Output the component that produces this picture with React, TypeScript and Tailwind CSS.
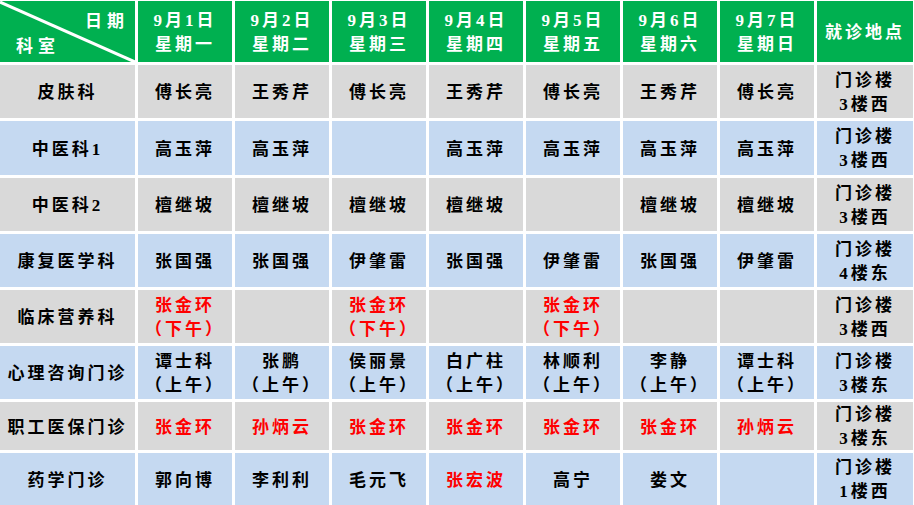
import React from 'react';

type Cell = { name?: string; note?: string; red?: boolean };

const days = [
  { date: '9月1日', week: '星期一' },
  { date: '9月2日', week: '星期二' },
  { date: '9月3日', week: '星期三' },
  { date: '9月4日', week: '星期四' },
  { date: '9月5日', week: '星期五' },
  { date: '9月6日', week: '星期六' },
  { date: '9月7日', week: '星期日' },
];

const n = (name: string): Cell => ({ name });
const r = (name: string, note?: string): Cell => ({ name, note, red: true });
const am = (name: string): Cell => ({ name, note: '（上午）' });
const E: Cell = {};

const rows: { dept: string; cells: Cell[]; place: string }[] = [
  { dept: '皮肤科', cells: [n('傅长亮'), n('王秀芹'), n('傅长亮'), n('王秀芹'), n('傅长亮'), n('王秀芹'), n('傅长亮')], place: '3楼西' },
  { dept: '中医科1', cells: [n('高玉萍'), n('高玉萍'), E, n('高玉萍'), n('高玉萍'), n('高玉萍'), n('高玉萍')], place: '3楼西' },
  { dept: '中医科2', cells: [n('檀继坡'), n('檀继坡'), n('檀继坡'), n('檀继坡'), E, n('檀继坡'), n('檀继坡')], place: '3楼西' },
  { dept: '康复医学科', cells: [n('张国强'), n('张国强'), n('伊肇雷'), n('张国强'), n('伊肇雷'), n('张国强'), n('伊肇雷')], place: '4楼东' },
  { dept: '临床营养科', cells: [r('张金环', '（下午）'), E, r('张金环', '（下午）'), E, r('张金环', '（下午）'), E, E], place: '3楼西' },
  { dept: '心理咨询门诊', cells: [am('谭士科'), am('张鹏'), am('侯丽景'), am('白广柱'), am('林顺利'), am('李静'), am('谭士科')], place: '3楼东' },
  { dept: '职工医保门诊', cells: [r('张金环'), r('孙炳云'), r('张金环'), r('张金环'), r('张金环'), r('张金环'), r('孙炳云')], place: '3楼东' },
  { dept: '药学门诊', cells: [n('郭向博'), n('李利利'), n('毛元飞'), r('张宏波'), n('高宁'), n('娄文'), E], place: '1楼西' },
];

const font = { fontFamily: '"Liberation Serif", "Noto Sans CJK SC", serif' };

export default function App() {
  return (
    <div className="w-[914px] h-[505px] bg-white overflow-hidden pt-px" style={font}>
      <div className="grid grid-cols-[135px_repeat(7,94px)_96px] grid-rows-[61px_53px_54px_53px_53px_53px_53px_48px_52px] gap-[3px] text-[17px] font-bold leading-[24px]">
        {/* header */}
        <div className="relative bg-[#00b050] text-white">
          <svg className="absolute inset-0" width="135" height="61">
            <line x1="0" y1="1" x2="135" y2="61" stroke="white" strokeWidth="3" />
          </svg>
          <span className="absolute left-[85px] top-[9px] tracking-[5px]">日期</span>
          <span className="absolute left-[16px] top-[34px] tracking-[5px]">科室</span>
        </div>
        {days.map((d) => (
          <div key={d.date} className="bg-[#00b050] text-white flex flex-col items-center justify-center pt-[2px] tracking-[3px]">
            <span>{d.date}</span>
            <span>{d.week}</span>
          </div>
        ))}
        <div className="bg-[#00b050] text-white flex items-center justify-center pt-[2px] tracking-[3px]">就诊地点</div>

        {rows.map((row, i) => {
          const bg = i % 2 === 0 ? 'bg-[#d9d9d9]' : 'bg-[#c5d9f1]';
          return (
            <React.Fragment key={row.dept}>
              <div className={`${bg} flex items-center justify-center pt-[3px] tracking-[3px] text-black`}>{row.dept}</div>
              {row.cells.map((c, j) => (
                <div
                  key={j}
                  className={`${bg} flex flex-col items-center justify-center pt-[3px] tracking-[3px] ${c.red ? 'text-[#ff0000]' : 'text-black'}`}
                >
                  {c.name && <span>{c.name}</span>}
                  {c.note && <span>{c.note}</span>}
                </div>
              ))}
              <div className={`${bg} flex flex-col items-center justify-center pt-[2px] tracking-[3px] text-black`}>
                <span>门诊楼</span>
                <span>{row.place}</span>
              </div>
            </React.Fragment>
          );
        })}
      </div>
    </div>
  );
}
